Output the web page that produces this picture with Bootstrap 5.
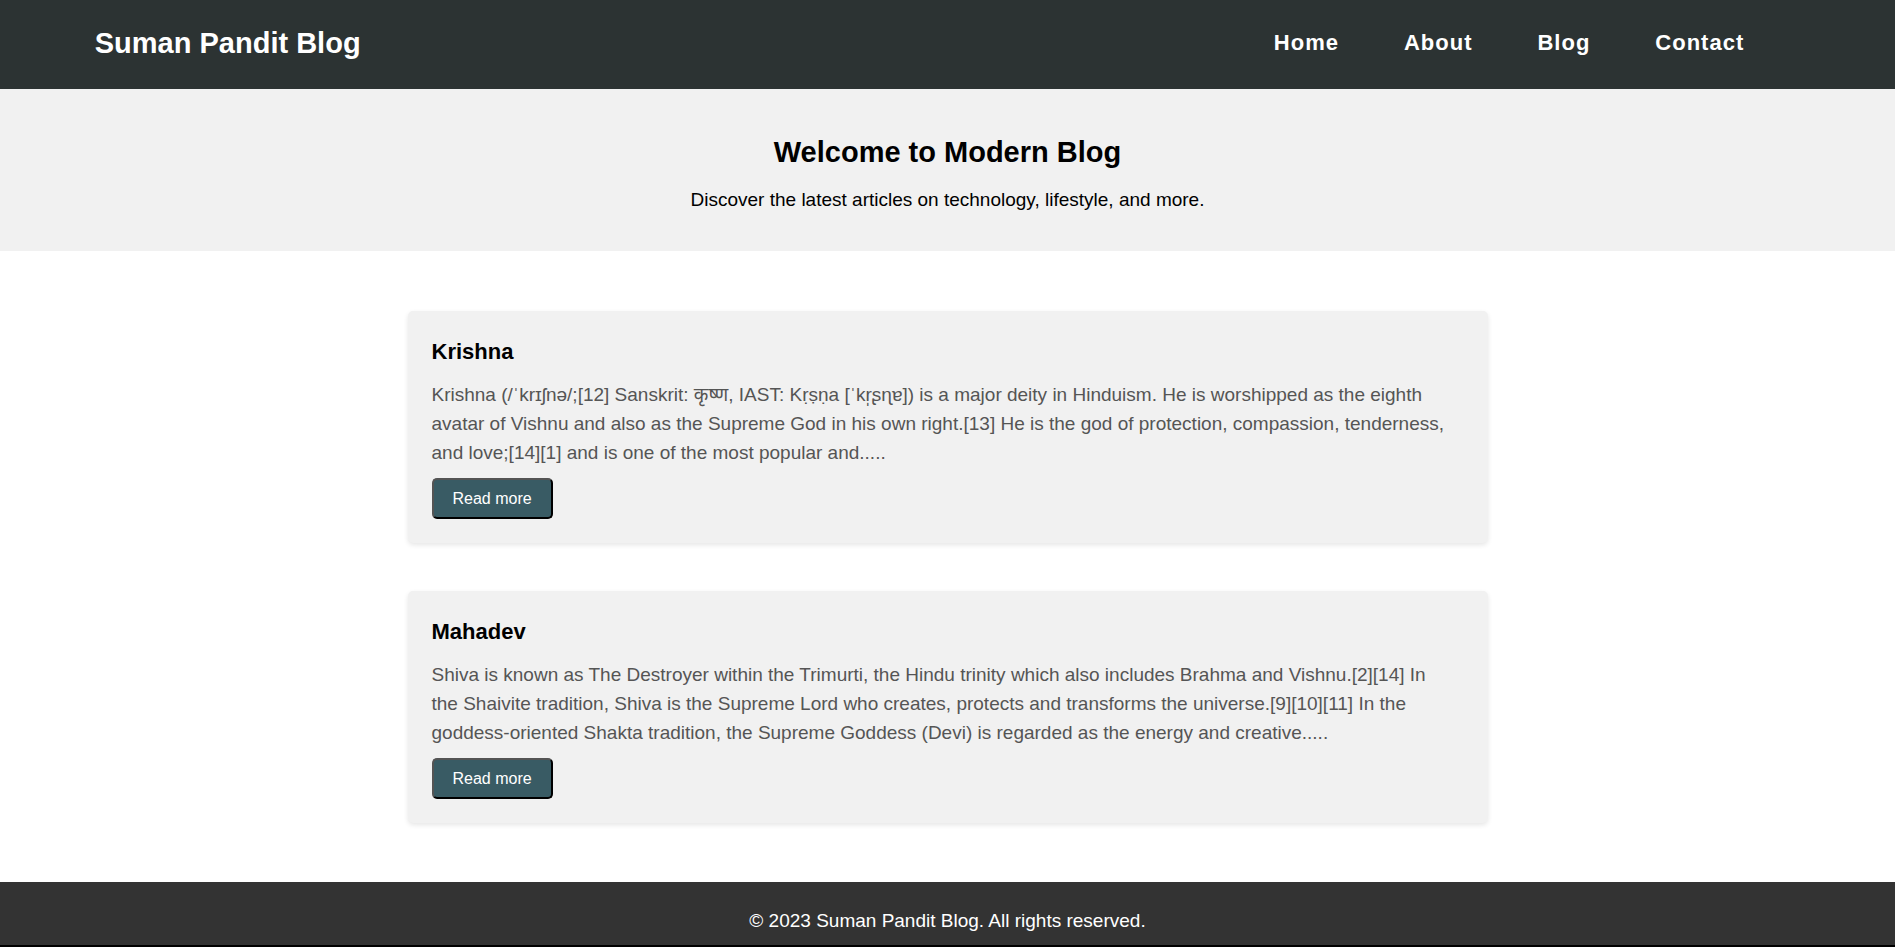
<!DOCTYPE html>
<html lang="en">
<head>
<meta charset="utf-8">
<meta name="viewport" content="width=device-width, initial-scale=1">
<title>Suman Pandit Blog</title>
<link rel="stylesheet" href="https://cdn.jsdelivr.net/npm/bootstrap@5.3.0/dist/css/bootstrap.min.css">
<style>
body { font-family: "Liberation Sans", "Noto Sans", sans-serif; font-size: 19px; line-height: 29px; color: #000; background: #fff; }
.site-header { background: #2c3333; padding: 20px 5% 23px; }
.site-title { font-size: 29px; line-height: 46px; font-weight: 700; margin: 0; }
.site-nav { gap: 65px; padding-right: 56px; }
.site-nav a { font-size: 22px; line-height: 46px; font-weight: 700; letter-spacing: 1px; }
.hero { background: #f1f1f1; padding: 40px 20px 37px; }
.hero h2 { font-size: 29px; line-height: 46px; font-weight: 700; margin-bottom: 10px; }
.posts { max-width: 1080px; padding: 60px 0 59px; gap: 48px; }
.post { background: #f1f1f1; border: 0; border-radius: 5px; padding: 24px 36px 24px 24px; box-shadow: 0 2px 5px rgba(0,0,0,.1); }
.post h3 { font-size: 22px; line-height: 34px; font-weight: 700; margin-bottom: 11px; }
.post p { color: #555; margin-bottom: 11px; }
.read-more { background: #395b64; color: #fff; border: 2px outset #000; border-radius: 5px; font-size: 16px; line-height: 21px; padding: 8px 19px; }
.site-footer { background: #333; color: #fff; padding: 24px 20px 10px; border-bottom: 2px solid #000; }
</style>
</head>
<body class="d-flex flex-column min-vh-100">
<header class="site-header d-flex flex-wrap justify-content-between align-items-start text-white">
  <h1 class="site-title">Suman Pandit Blog</h1>
  <nav>
    <ul class="site-nav list-unstyled d-flex flex-wrap mb-0">
      <li><a class="d-block text-white text-decoration-none" href="#">Home</a></li>
      <li><a class="d-block text-white text-decoration-none" href="#">About</a></li>
      <li><a class="d-block text-white text-decoration-none" href="#">Blog</a></li>
      <li><a class="d-block text-white text-decoration-none" href="#">Contact</a></li>
    </ul>
  </nav>
</header>
<section class="hero text-center">
  <h2>Welcome to Modern Blog</h2>
  <p class="mb-0">Discover the latest articles on technology, lifestyle, and more.</p>
</section>
<main class="posts d-flex flex-column w-100 mx-auto">
  <article class="post card align-items-start">
    <h3>Krishna</h3>
    <p>Krishna (/ˈkrɪʃnə/;[12] Sanskrit: कृष्ण, IAST: Kṛṣṇa [ˈkr̩ʂɳɐ]) is a major deity in Hinduism. He is worshipped as the eighth avatar of Vishnu and also as the Supreme God in his own right.[13] He is the god of protection, compassion, tenderness, and love;[14][1] and is one of the most popular and.....</p>
    <button class="read-more" type="button">Read more</button>
  </article>
  <article class="post card align-items-start">
    <h3>Mahadev</h3>
    <p>Shiva is known as The Destroyer within the Trimurti, the Hindu trinity which also includes Brahma and Vishnu.[2][14] In the Shaivite tradition, Shiva is the Supreme Lord who creates, protects and transforms the universe.[9][10][11] In the goddess-oriented Shakta tradition, the Supreme Goddess (Devi) is regarded as the energy and creative.....</p>
    <button class="read-more" type="button">Read more</button>
  </article>
</main>
<footer class="site-footer text-center">
  <p class="mb-0">© 2023 Suman Pandit Blog. All rights reserved.</p>
</footer>
<script src="https://cdn.jsdelivr.net/npm/bootstrap@5.3.0/dist/js/bootstrap.bundle.min.js"></script>
</body>
</html>
